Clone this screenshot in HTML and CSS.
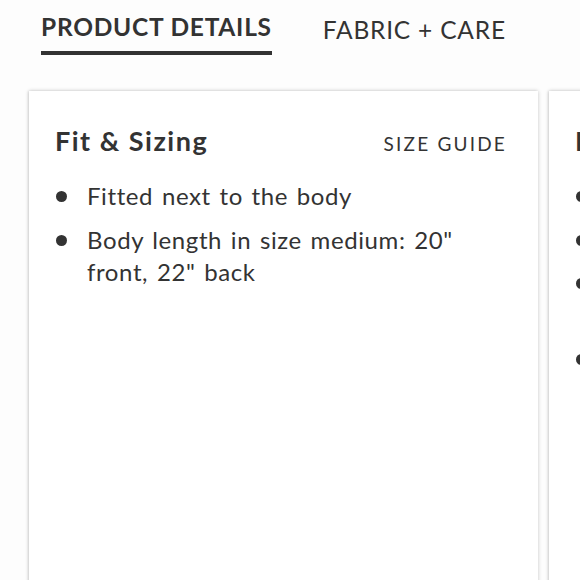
FILE: index.html
```html
<!DOCTYPE html>
<html lang="en">
<head>
<meta charset="utf-8">
<title>Product Details</title>
<link rel="stylesheet" href="styles.css">
</head>
<body>
<div class="page">
  <nav class="tabs">
    <a class="tab tab-active">PRODUCT DETAILS</a>
    <a class="tab">FABRIC + CARE</a>
  </nav>
  <div class="cards">
    <section class="card">
      <header class="card-head">
        <h2 class="card-title">Fit &amp; Sizing</h2>
        <a class="card-link">SIZE GUIDE</a>
      </header>
      <ul class="bullets">
        <li>Fitted next to the body</li>
        <li>Body length in size medium: 20" front, 22" back</li>
      </ul>
    </section>
    <section class="card">
      <header class="card-head">
        <h2 class="card-title">Design Details</h2>
      </header>
      <ul class="bullets">
        <li>Scoop neckline</li>
        <li>Racerback straps</li>
        <li>Lightweight built-in shelf bra for light support</li>
        <li>Hidden pocket at waistband</li>
      </ul>
    </section>
  </div>
</div>
</body>
</html>
```
FILE: styles.css
```css
* { box-sizing: border-box; }
html, body {
  margin: 0;
  padding: 0;
  background: #fdfdfd;
  overflow: hidden;
}
body {
  font-family: Lato, "Noto Sans", sans-serif;
  color: #333;
}
.page {
  width: 580px;
  height: 580px;
  overflow: hidden;
}
.tabs {
  display: flex;
  gap: 51px;
  padding: 11px 0 0 41px;
  height: 91px;
}
.tab {
  font-size: 24.5px;
  line-height: 32px;
  color: #333;
  letter-spacing: 0.8px;
  padding-top: 3px;
}
.tab-active {
  font-weight: 700;
  letter-spacing: 0.75px;
  padding-top: 0;
  height: 44px;
  border-bottom: 4px solid #333;
  padding-bottom: 8px;
}
.cards {
  display: flex;
  gap: 11px;
  padding-left: 29px;
}
.card {
  flex: 0 0 509px;
  min-height: 520px;
  background: #fff;
  box-shadow: 0 0 4px rgba(0, 0, 0, 0.22), -1px 0 2px rgba(0,0,0,0.08);
  padding: 33px 32px 0 26px;
}
.card-head {
  display: flex;
  justify-content: space-between;
  align-items: baseline;
  margin-bottom: 22px;
}
.card-title {
  margin: 0;
  font-size: 27px;
  line-height: 34px;
  font-weight: 700;
  letter-spacing: 1.5px;
  white-space: nowrap;
}
.card-link {
  font-size: 19px;
  letter-spacing: 2.2px;
  margin-right: -1px;
  color: #333;
}
.bullets {
  list-style: none;
  margin: 0;
  padding: 0;
}
.bullets li {
  position: relative;
  padding-left: 32px;
  font-size: 24px;
  line-height: 32.5px;
  letter-spacing: 0.6px;
  word-spacing: 2px;
  margin-bottom: 11px;
  padding-right: 30px;
}
.bullets li::before {
  content: "";
  position: absolute;
  left: 1px;
  top: 11px;
  width: 11px;
  height: 11px;
  border-radius: 50%;
  background: #333;
}
```
